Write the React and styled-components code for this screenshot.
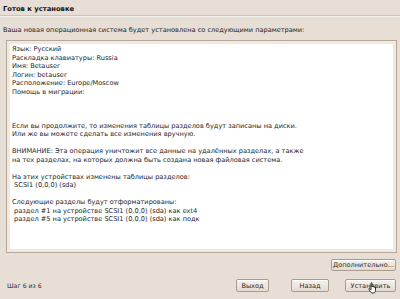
import React from "react";
import styled, { createGlobalStyle } from "styled-components";

const Global = createGlobalStyle`
  html, body { margin: 0; padding: 0; }
  body {
    background: #e7dfd5;
    font-family: "DejaVu Sans", "Liberation Sans", sans-serif;
    color: #1c1c1c;
  }
`;

const Page = styled.div`
  width: 400px;
  height: 299px;
  display: flex;
  flex-direction: column;
  overflow: hidden;
  position: relative;
`;

const Title = styled.div`
  font-weight: bold;
  font-size: 6.8px;
  line-height: 8px;
  padding: 5px 3px 2px;
  color: #111;
`;

const Separator = styled.div`
  height: 0;
  border-top: 1px solid #cdc3b7;
  border-bottom: 1px solid #f6f2ed;
`;

const Subtitle = styled.div`
  font-size: 6.6px;
  line-height: 8px;
  padding: 9px 3px 0;
`;

const Frame = styled.div`
  margin: 6px 3px 0 6px;
  height: 213px;
  box-sizing: border-box;
  border: 1px solid #b6a797;
  padding: 3px;
  background: #efe9e2;
  display: flex;
`;

const TextArea = styled.div`
  flex: 1;
  background: #fff;
  padding: 1px 2px;
  font-size: 6.6px;
  line-height: 8.5px;
  white-space: pre;
  color: #1e1e2a;
`;

const AdvancedRow = styled.div`
  display: flex;
  justify-content: flex-end;
  padding: 6px 4px 0 0;
`;

const Button = styled.div`
  box-sizing: border-box;
  height: ${(p) => p.$h || 13}px;
  width: ${(p) => p.$w}px;
  display: flex;
  align-items: center;
  justify-content: center;
  font-size: 6.6px;
  color: #2a2a2a;
  border: 1px solid #a99c8e;
  border-radius: 2px;
  background: linear-gradient(#f6f2ee, #e4dbd1);
  box-shadow: inset 0 1px 0 #ffffff;
  margin-left: ${(p) => p.$ml || 0}px;
  position: relative;
`;

const Footer = styled.div`
  display: flex;
  align-items: center;
  padding: 8px 4px 0 7px;
`;

const Step = styled.div`
  font-size: 6.2px;
  color: #2a2a3a;
  flex: 1;
`;

const Cursor = styled.svg`
  position: absolute;
  left: 22px;
  top: 2px;
`;

const lines = [
  "Язык: Русский",
  "Раскладка клавиатуры: Russia",
  "Имя: Betauser",
  "Логин: betauser",
  "Расположение: Europe/Moscow",
  "Помощь в миграции:",
  "",
  "",
  "",
  "Если вы продолжите, то изменения таблицы разделов будут записаны на диски.",
  "Или же вы можете сделать все изменения вручную.",
  "",
  "ВНИМАНИЕ: Эта операция уничтожит все данные на удалённых разделах, а также",
  "на тех разделах, на которых должна быть создана новая файловая система.",
  "",
  "На этих устройствах изменены таблицы разделов:",
  " SCSI1 (0,0,0) (sda)",
  "",
  "Следующие разделы будут отформатированы:",
  " раздел #1 на устройстве SCSI1 (0,0,0) (sda) как ext4",
  " раздел #5 на устройстве SCSI1 (0,0,0) (sda) как подк",
];

export default function App() {
  return (
    <Page>
      <Global />
      <Title>Готов к установке</Title>
      <Separator />
      <Subtitle>
        Ваша новая операционная система будет установлена со следующими параметрами:
      </Subtitle>
      <Frame>
        <TextArea>{lines.join("\n")}</TextArea>
      </Frame>
      <AdvancedRow>
        <Button $w={65} $h={12}>Дополнительно...</Button>
      </AdvancedRow>
      <Footer>
        <Step>Шаг 6 из 6</Step>
        <Button $w={33}>Выход</Button>
        <Button $w={38} $ml={22}>Назад</Button>
        <Button $w={51} $ml={16}>
          Установить
          <Cursor width="10" height="12" viewBox="0 0 10 12">
            <path
              d="M3 1.2 C3 0.6 4 0.6 4 1.2 L4 5 L4.3 4.4 C4.5 3.9 5.3 4 5.3 4.6 L5.3 5 C5.5 4.5 6.4 4.6 6.4 5.2 L6.4 5.5 C6.6 5 7.5 5.1 7.5 5.7 L7.5 8.5 C7.5 10 6.6 11 5.3 11 L4.3 11 C3.3 11 2.8 10.4 2.3 9.6 L0.9 7.2 C0.6 6.6 1.3 6.1 1.8 6.6 L3 7.8 Z"
              fill="#fff"
              stroke="#000"
              strokeWidth="0.8"
              strokeLinejoin="round"
            />
          </Cursor>
        </Button>
      </Footer>
    </Page>
  );
}
